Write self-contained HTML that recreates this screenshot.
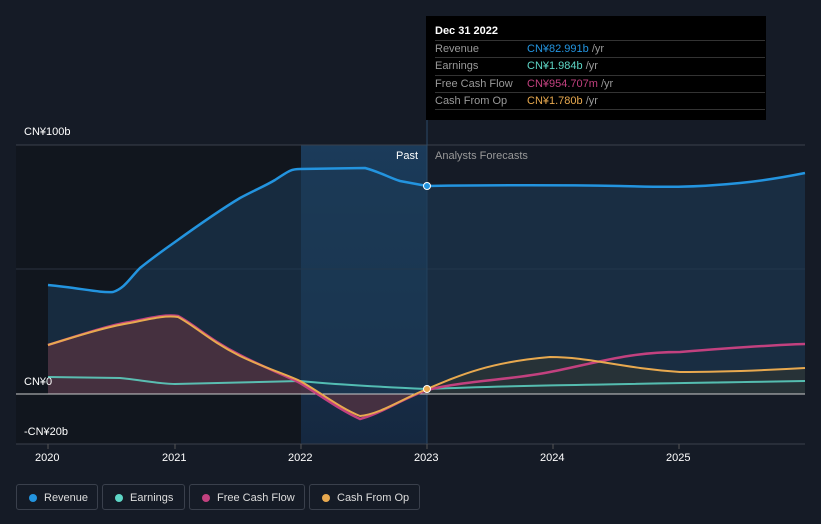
<!DOCTYPE html><html><head><meta charset="utf-8"><style>
body{margin:0;width:821px;height:524px;background:#151b26;font-family:"Liberation Sans",sans-serif;overflow:hidden;position:relative}
.t{position:absolute;font-size:11px;color:#fff}
.tip{position:absolute;left:426px;top:16px;width:340px;height:104px;background:#000;}
.tip .h{position:absolute;left:9px;top:9px;font-size:11px;color:#fff;font-weight:bold}
.row{position:absolute;left:9px;width:330px;height:17px;border-top:1px solid #333;font-size:11px;color:#999;line-height:17px}
.row span{position:absolute;left:92px}
.leg{position:absolute;top:484px;height:26px;border:1px solid #3a404c;border-radius:3px;font-size:11px;color:#ddd;line-height:26px;box-sizing:border-box}
.leg i{position:absolute;left:12px;top:9px;width:8px;height:8px;border-radius:50%}
.leg b{font-weight:normal;position:absolute;left:27px}
</style></head><body>
<svg width="821" height="524" style="position:absolute;left:0;top:0">
<defs><linearGradient id="hl" x1="0" y1="0" x2="0" y2="1"><stop offset="0" stop-color="#1b3b5a"/><stop offset="1" stop-color="#152840"/></linearGradient></defs>
<rect x="16" y="145" width="285" height="299" fill="#11161e"/>
<rect x="301" y="145" width="126" height="299" fill="url(#hl)"/>
<line x1="16" y1="145" x2="805" y2="145" stroke="#3a404c"/>
<line x1="16" y1="269" x2="805" y2="269" stroke="#2c3340"/>
<line x1="16" y1="444" x2="805" y2="444" stroke="#3a404c"/>
<line x1="427" y1="118" x2="427" y2="444" stroke="#2a4a68"/>
<path d="M48,285 C80,288 100,293 113,292 C125,288 130,278 140,268 C155,256 165,249 175,242 C200,224 220,210 240,198 C255,190 265,186 275,180 C290,170 292,169 300,169 L365,168 C380,172 390,178 400,181 L427,186 C500,185 560,185 620,186 C660,187 690,188 740,183 C770,180 790,176 805,173 L805,394 L48,394 Z" fill="#1d3a55" opacity="0.6"/>
<path d="M48,345 C80,335 110,325 130,322 C150,318 165,314 178,316 C195,325 210,340 240,355 C265,368 285,375 300,383 C320,395 340,410 360,417 C380,414 400,400 427,390 L427,394 L48,394 Z" fill="#5a3340" opacity="0.7"/>
<path d="M427,390 C460,375 490,362 550,357 C590,357 620,368 680,372 C730,372 770,370 805,368 L805,394 L427,394 Z" fill="#303630" opacity="0.6"/>
<line x1="16" y1="394" x2="805" y2="394" stroke="#ccc"/>
<path d="M48,285 C80,288 100,293 113,292 C125,288 130,278 140,268 C155,256 165,249 175,242 C200,224 220,210 240,198 C255,190 265,186 275,180 C290,170 292,169 300,169 L365,168 C380,172 390,178 400,181 L427,186 C500,185 560,185 620,186 C660,187 690,188 740,183 C770,180 790,176 805,173" fill="none" stroke="#2394df" stroke-width="2.5"/>
<path d="M48,377 L120,378 C140,380 160,384 175,384 L300,381 C330,384 360,386 427,389 C500,386 560,385 805,381" fill="none" stroke="#5ed6c6" stroke-width="2" opacity="0.85"/>
<path d="M48,345 C80,335 110,325 130,322 C150,318 165,314 178,316 C195,325 210,340 240,355 C265,368 285,375 300,383 C320,395 340,410 360,419 C380,414 400,400 427,390 C470,380 510,380 550,372 C600,362 630,352 680,352 C730,348 770,345 805,344" fill="none" stroke="#c2417f" stroke-width="2.5"/>
<path d="M48,345 C80,335 110,326 130,323 C150,319 165,315 178,317 C195,326 210,341 240,356 C265,368 285,374 300,381 C320,392 340,408 360,416 C380,414 400,400 427,389 C460,375 490,362 550,357 C590,357 620,368 680,372 C730,372 770,370 805,368" fill="none" stroke="#e8a94f" stroke-width="2"/>
<circle cx="427" cy="186" r="3.5" fill="#2394df" stroke="#fff" stroke-width="1"/>
<circle cx="427" cy="389" r="3.5" fill="#e8a94f" stroke="#fff" stroke-width="1"/>
<line x1="16" y1="444" x2="805" y2="444" stroke="#3a404c"/>
<g stroke="#555"><line x1="48" y1="444" x2="48" y2="449"/><line x1="175" y1="444" x2="175" y2="449"/><line x1="301" y1="444" x2="301" y2="449"/><line x1="427" y1="444" x2="427" y2="449"/><line x1="553" y1="444" x2="553" y2="449"/><line x1="679" y1="444" x2="679" y2="449"/></g>
</svg>
<div class="t" style="left:24px;top:126px">CN¥100b</div>
<div class="t" style="left:24px;top:376px">CN¥0</div>
<div class="t" style="left:24px;top:426px">-CN¥20b</div>
<div class="t" style="left:396px;top:150px">Past</div>
<div class="t" style="left:435px;top:150px;color:#999">Analysts Forecasts</div>
<div class="t" style="left:35px;top:452px">2020</div>
<div class="t" style="left:162px;top:452px">2021</div>
<div class="t" style="left:288px;top:452px">2022</div>
<div class="t" style="left:414px;top:452px">2023</div>
<div class="t" style="left:540px;top:452px">2024</div>
<div class="t" style="left:666px;top:452px">2025</div>
<div class="tip"><div class="h">Dec 31 2022</div>
<div class="row" style="top:24px">Revenue<span><font color="#2394df">CN¥82.991b</font> /yr</span></div>
<div class="row" style="top:41px">Earnings<span><font color="#5ed6c6">CN¥1.984b</font> /yr</span></div>
<div class="row" style="top:59px">Free Cash Flow<span><font color="#c2417f">CN¥954.707m</font> /yr</span></div>
<div class="row" style="top:76px">Cash From Op<span><font color="#e8a94f">CN¥1.780b</font> /yr</span></div>
<div class="row" style="top:93px;height:0"></div>
</div>
<div class="leg" style="left:16px;width:82px"><i style="background:#2394df"></i><b>Revenue</b></div>
<div class="leg" style="left:102px;width:83px"><i style="background:#5ed6c6"></i><b>Earnings</b></div>
<div class="leg" style="left:189px;width:116px"><i style="background:#c2417f"></i><b>Free Cash Flow</b></div>
<div class="leg" style="left:309px;width:111px"><i style="background:#e8a94f"></i><b>Cash From Op</b></div>
</body></html>
